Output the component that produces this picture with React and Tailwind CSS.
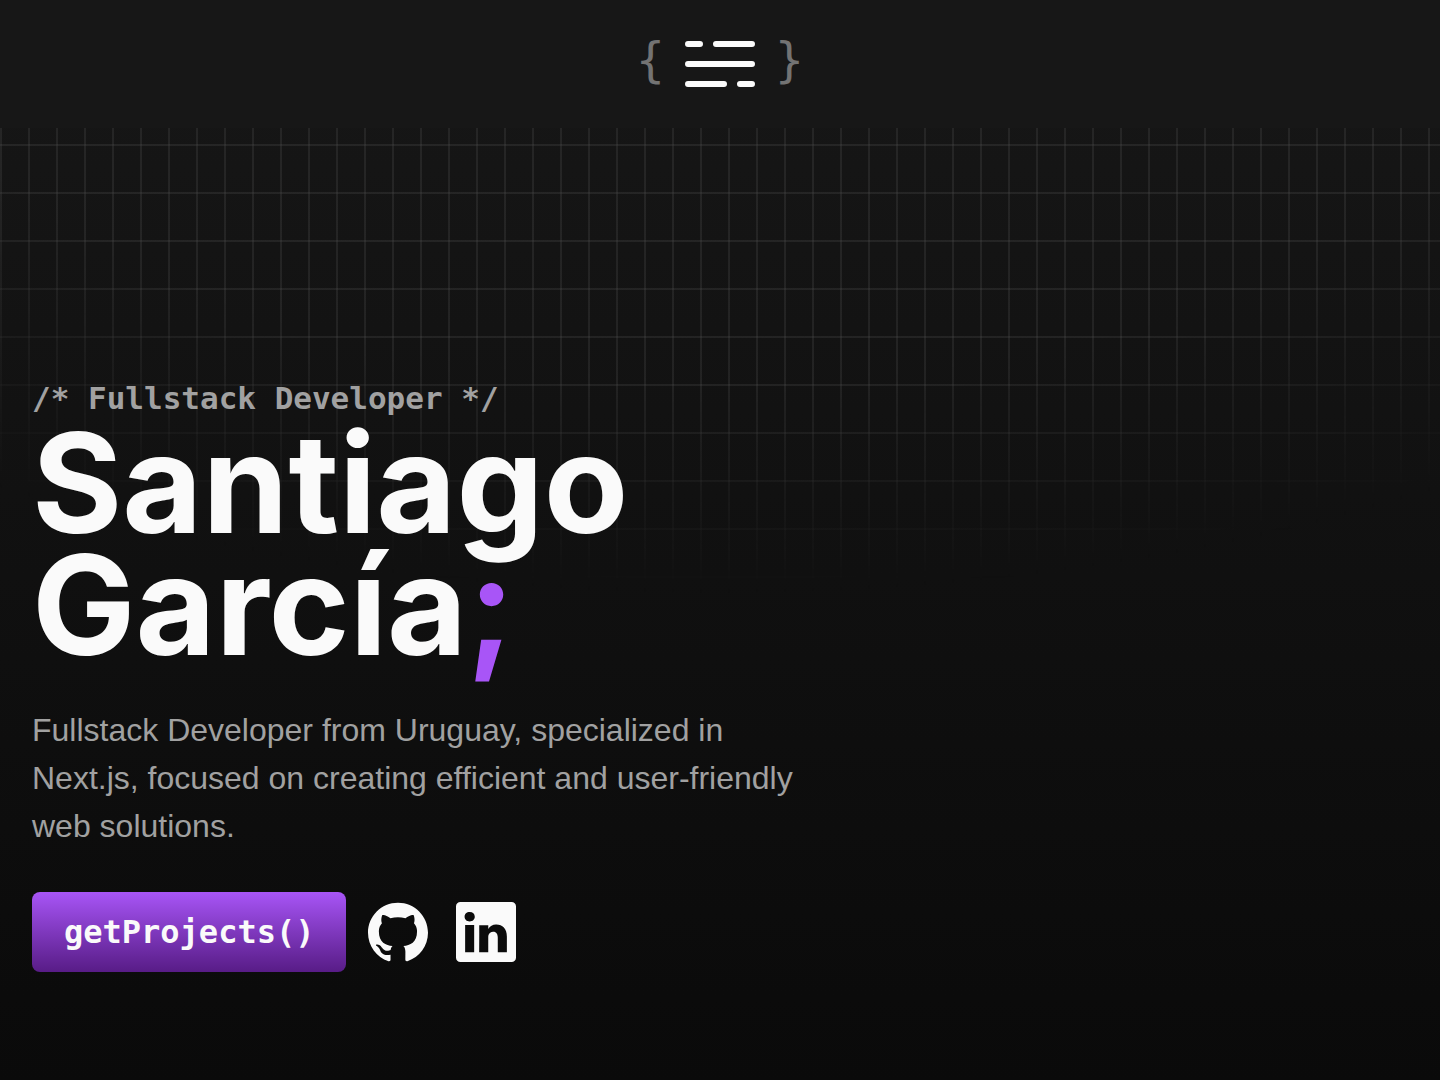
import React from "react";

const Logo = () => {
  return (
    <a
      href="#home"
      aria-label="Home"
      className="flex items-center gap-5 font-['DejaVu_Sans_Mono',monospace] text-5xl text-neutral-500"
    >
      <span className="pb-2">{"{"}</span>
      <svg
        className="h-12 w-[70px] text-neutral-50"
        viewBox="0 0 70 48"
        fill="none"
        stroke="currentColor"
        strokeWidth="6"
        strokeLinecap="round"
      >
        <path d="M3 4h12M31 4h36M3 24h64M3 44h36M55 44h12" />
      </svg>
      <span className="pb-2">{"}"}</span>
    </a>
  );
};

const socials = [
  {
    label: "GitHub",
    href: "https://github.com",
    path: "M12 .297c-6.63 0-12 5.373-12 12 0 5.303 3.438 9.8 8.205 11.385.6.113.82-.258.82-.577 0-.285-.01-1.04-.015-2.04-3.338.724-4.042-1.61-4.042-1.61C4.422 18.07 3.633 17.7 3.633 17.7c-1.087-.744.084-.729.084-.729 1.205.084 1.838 1.236 1.838 1.236 1.07 1.835 2.809 1.305 3.495.998.108-.776.417-1.305.76-1.605-2.665-.3-5.466-1.332-5.466-5.93 0-1.31.465-2.38 1.235-3.22-.135-.303-.54-1.523.105-3.176 0 0 1.005-.322 3.3 1.23.96-.267 1.98-.399 3-.405 1.02.006 2.04.138 3 .405 2.28-1.552 3.285-1.23 3.285-1.23.645 1.653.24 2.873.12 3.176.765.84 1.23 1.91 1.23 3.22 0 4.61-2.805 5.625-5.475 5.92.42.36.81 1.096.81 2.22 0 1.606-.015 2.896-.015 3.286 0 .315.21.69.825.57C20.565 22.092 24 17.592 24 12.297c0-6.627-5.373-12-12-12",
  },
  {
    label: "LinkedIn",
    href: "https://linkedin.com",
    path: "M22.23 0H1.77C.8 0 0 .77 0 1.72v20.56C0 23.23.8 24 1.77 24h20.46c.98 0 1.77-.77 1.77-1.72V1.72C24 .77 23.2 0 22.23 0zM7.27 20.1H3.65V9.24h3.62V20.1zM5.47 7.76h-.03c-1.22 0-2-.83-2-1.87 0-1.06.8-1.87 2.05-1.87 1.24 0 2 .8 2.02 1.87 0 1.04-.78 1.87-2.05 1.87zM20.34 20.1h-3.63v-5.8c0-1.45-.52-2.45-1.83-2.45-1 0-1.6.67-1.87 1.32-.1.23-.11.55-.11.88v6.05H9.28s.05-9.82 0-10.84h3.63v1.54a3.6 3.6 0 0 1 3.26-1.8c2.39 0 4.18 1.56 4.18 4.89v6.21z",
  },
];

const Hero = () => {
  return (
    <main className="relative px-8 pt-64">
      <p className="font-['DejaVu_Sans_Mono',monospace] text-[31px] leading-7 font-bold text-neutral-400">
        /* Fullstack Developer */
      </p>
      <h1 className="mt-2.5 font-['Inter',sans-serif] text-[138px] leading-[122px] font-bold text-neutral-50">
        Santiago
        <br />
        García<span className="text-[#a855f7]">;</span>
      </h1>
      <p className="mt-10 text-[32px] leading-12 text-neutral-400">
        Fullstack Developer from Uruguay, specialized in
        <br />
        Next.js, focused on creating efficient and user-friendly
        <br />
        web solutions.
      </p>

      {/* Actions */}
      <div className="mt-[42px] flex items-center">
        <button className="h-20 rounded-lg bg-linear-to-b from-[#a855f7] to-[#581c87] px-8 font-['DejaVu_Sans_Mono',monospace] text-[32px] font-bold text-neutral-50">
          getProjects()
        </button>
        <div className="ml-[22px] flex gap-7">
          {socials.map((item) => (
            <a key={item.label} href={item.href} aria-label={item.label}>
              <svg
                className="size-15 text-neutral-50"
                viewBox="0 0 24 24"
                fill="currentColor"
              >
                <path d={item.path} />
              </svg>
            </a>
          ))}
        </div>
      </div>
    </main>
  );
};

export default function App() {
  return (
    <div className="relative min-h-screen bg-linear-to-b from-neutral-900 to-neutral-950 font-['Liberation_Sans',sans-serif]">
      {/* Grid backdrop */}
      <div className="absolute inset-0 bg-[linear-gradient(to_right,#4f4f4f48_2px,transparent_2px),linear-gradient(to_bottom,#4f4f4f48_2px,transparent_2px)] bg-size-[28px_48px] mask-[radial-gradient(ellipse_80%_50%_at_50%_0%,#000_70%,transparent_110%)]" />
      <header className="relative flex h-32 items-center justify-center bg-neutral-900">
        <Logo />
      </header>
      <Hero />
    </div>
  );
}
